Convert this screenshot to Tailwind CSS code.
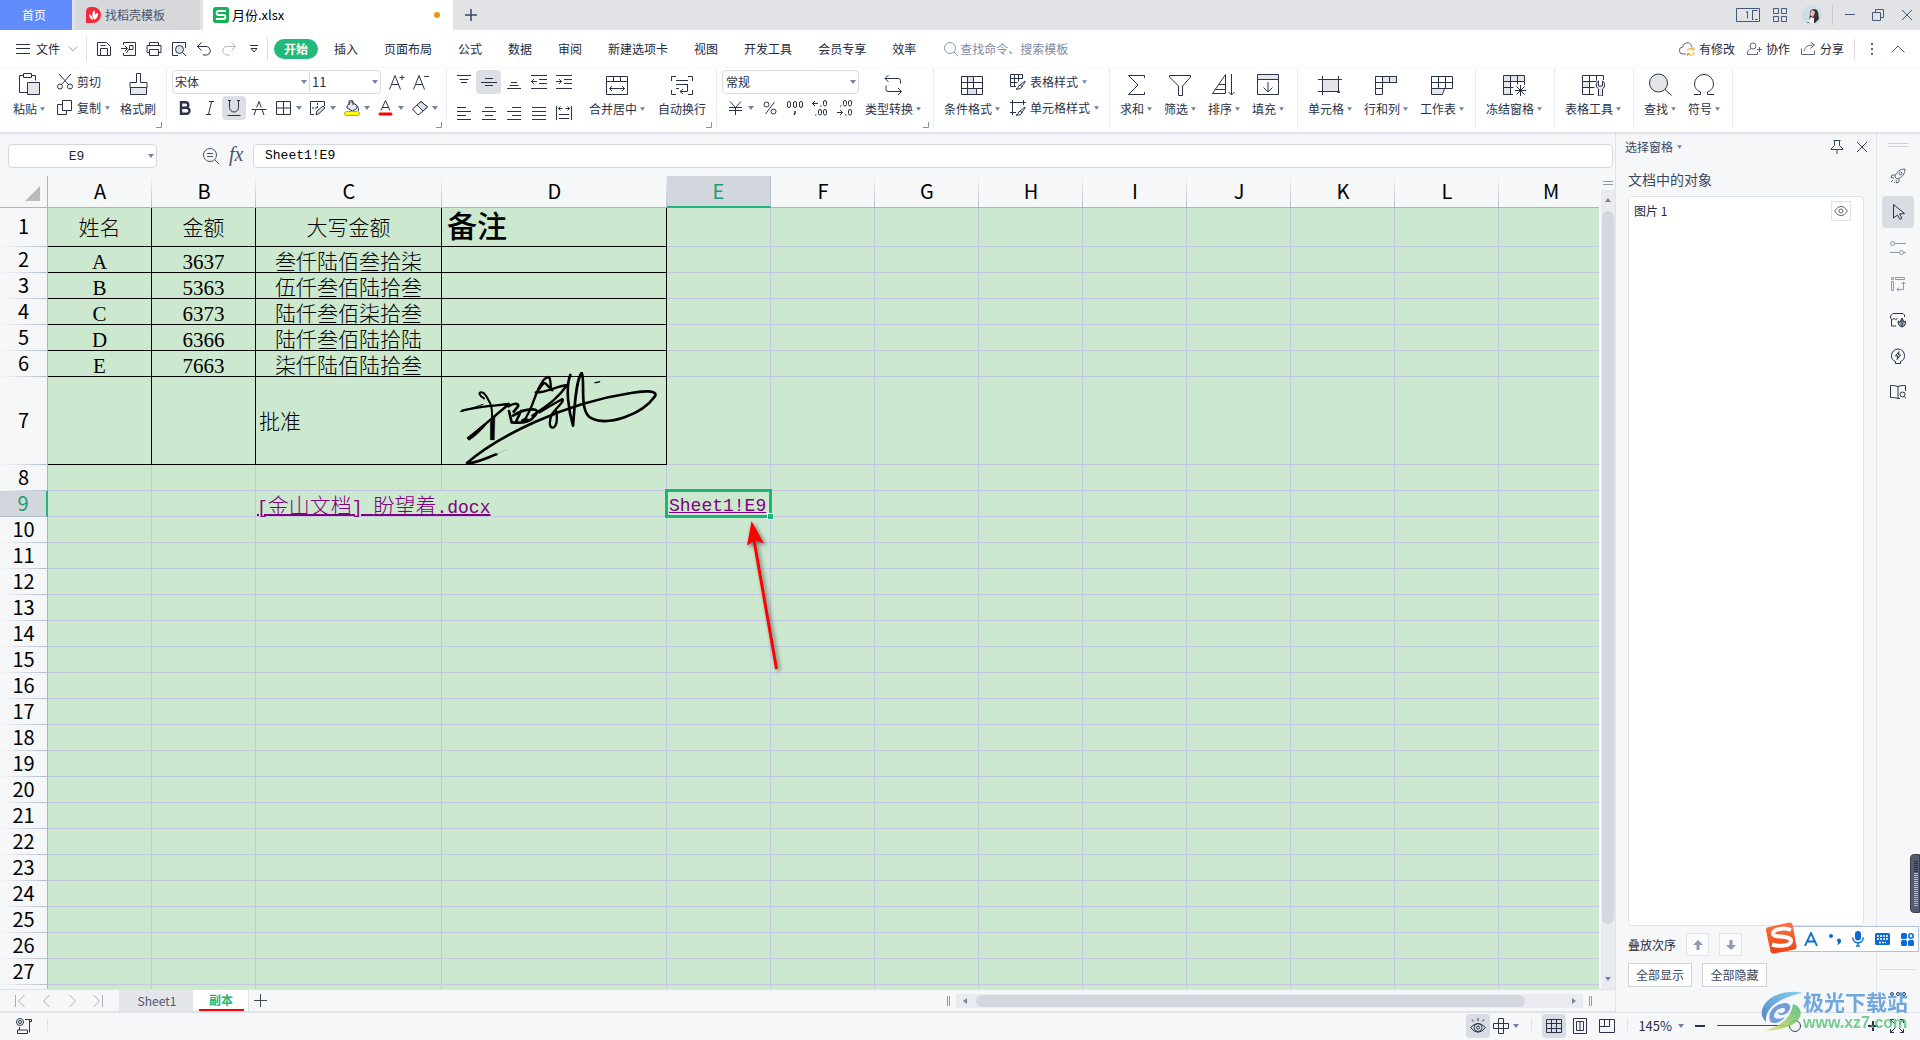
<!DOCTYPE html>
<html lang="zh-CN" class="h-full overflow-hidden">
<head>
<meta charset="utf-8">
<title>月份.xlsx</title>
<script src="https://cdn.jsdelivr.net/npm/@tailwindcss/browser@4"></script>
</head>
<body class="relative flex h-full flex-col overflow-hidden bg-[#f5f7f9] font-['Noto_Sans_CJK_SC',sans-serif] text-xs text-[#232a3d]">

<svg class="hidden">
  <symbol id="caret" viewBox="0 0 6 4"><path d="M0 0h6L3 4z" fill="#7282a3"/></symbol>
  <symbol id="corner" viewBox="0 0 6 6"><path d="M5.500 0v5.500H0" fill="none" stroke="#8390ab"/></symbol>
</svg>

<!-- title bar -->
<header class="flex h-[30px] shrink-0 items-stretch bg-[#e1e3e6]">
  <button class="w-[72px] bg-[#608dfb] pr-1 text-white">首页</button>
  <button class="ml-[3px] flex w-[125px] items-center gap-[3px] bg-[#d7d8db] pl-[11px] text-[#4b5468]">
    <svg class="size-4" viewBox="0 0 16 16"><path d="M0 4.500A4.500 4.500 0 0 1 4.500 0H7a8 8 0 1 1 0 16H0z" fill="#f4293b"/><path d="M8 3c2 3 1.500 6-.5 9C5.500 9 6 6 8 3zM12 5.500c.6 3.500-.8 6-4 7.500 0-3.500 1-6 4-7.500zM3 7c2.500 1 3.800 3 4 6-2.500-.8-4-3-4-6z" fill="#fff"/></svg>
    <span>找稻壳模板</span>
  </button>
  <button class="ml-[3px] flex w-[250px] items-center gap-[3px] bg-white pl-[10px] pr-[13px] text-black">
    <svg class="size-4" viewBox="0 0 16 16"><rect width="16" height="16" rx="2.500" fill="#15b358"/><path d="M13 4H5.500C3 4 3 8 5.500 8h5c2.500 0 2.500 4 0 4H3" fill="none" stroke="#fff" stroke-width="1.800"/></svg>
    <span class="text-[13px]">月份.xlsx</span>
    <span class="ml-auto size-1.5 rounded-full bg-[#e59a0c]"></span>
  </button>
  <button class="ml-2 flex w-5 items-center justify-center" aria-label="新建"><svg class="size-3" viewBox="0 0 12 12"><path d="M6 0v12M0 6h12" stroke="#3c465d" stroke-width="1.500"/></svg></button>
  <div class="ml-auto flex items-center pr-2 text-[#47577c]">
    <svg class="h-3.5 w-6" viewBox="0 0 24 14" fill="none" stroke="currentColor"><path d="M.5.500h23v13H.500zM16.500 2v10M16.500 2.500h5M16.500 11.500h1M10 4.500l1.500-1v7M19 11.500h2.500"/></svg>
    <svg class="ml-[13px] size-3.5" viewBox="0 0 14 14" fill="none" stroke="currentColor"><path d="M.5.500h5v5h-5zM8.500.500h5v5h-5zM.5 8.500h5v5h-5zM8.500 8.500h5v5h-5z"/></svg>
    <svg class="ml-[15px] size-5" viewBox="0 0 20 20"><circle cx="10" cy="10" r="10" fill="#cddfe6"/><path d="M8 7c1-4 7-4 8 0l1 7-4 4-8 0c2-2 3-6 3-11z" fill="#3a2f38"/><path d="M9 6c2-2 4 0 4 2l-2 4-3-2z" fill="#e6bdb2"/><path d="M5 17l4-5 3 1 0 6z" fill="#f3eef0"/></svg>
    <span class="ml-2.5 h-5 w-px bg-[#c6c9cf]"></span>
    <button class="ml-3 h-5 w-2.5" aria-label="最小化"><svg class="size-2.5" viewBox="0 0 10 10"><path d="M0 4.500h10" stroke="currentColor"/></svg></button>
    <button class="ml-[17px]" aria-label="还原"><svg class="size-3" viewBox="0 0 12 12" fill="none" stroke="currentColor"><path d="M.5 3.500h8v8h-8zM3.500 3.500v-3h8v8h-3"/></svg></button>
    <button class="ml-[18px]" aria-label="关闭"><svg class="size-2.5" viewBox="0 0 10 10" stroke="currentColor"><path d="M0 0l10 10M10 0L0 10"/></svg></button>
  </div>
</header>

<!-- menu row -->
<nav class="flex h-[38px] shrink-0 items-center bg-white">
  <button class="flex w-[86px] items-center pl-4">
    <svg class="h-3 w-3.5" viewBox="0 0 14 12" stroke="#2b3248"><path d="M0 1.500h14M0 5.500h14M0 10.500h14"/></svg>
    <span class="ml-1.5">文件</span>
    <svg class="ml-2 h-1.5 w-2.5" viewBox="0 0 10 6" fill="none" stroke="#a2aab9"><path d="M.5.500L5 5 9.500.500"/></svg>
  </button>
  <span class="h-6 w-px bg-[#dcdee3]"></span>
  <div class="flex pl-1 pr-px text-[#2b3248]">
    <button class="flex w-[25px] justify-center" aria-label="保存"><svg class="size-4" viewBox="0 0 16 16" fill="none" stroke="currentColor"><path d="M1.500 1.500h9l4 4v9h-13zM4.500 14.500v-7h7v7M4.500 4.500h5"/></svg></button>
    <button class="flex w-[25px] justify-center" aria-label="输出"><svg class="size-4" viewBox="0 0 16 16" fill="none" stroke="currentColor"><path d="M2.500 4V1.500h12v13h-12V12M0 7.500h6M4 5l2.500 2.500L4 10M8.500 4.500h3.500v4H7.500L5.500 12M8.500 4.500V8"/></svg></button>
    <button class="flex w-[25px] justify-center" aria-label="打印"><svg class="size-4" viewBox="0 0 16 16" fill="none" stroke="currentColor"><path d="M3.500 4.500v-3h9v3M3.500 11.500h-2.500v-7h14v7h-2.500M3.500 8.500h9v6h-9z"/></svg></button>
    <button class="flex w-[25px] justify-center" aria-label="预览"><svg class="size-4" viewBox="0 0 16 16" fill="none" stroke="currentColor"><path d="M7 14.500H1.500v-13h13V7"/><circle cx="8.500" cy="8.500" r="4" fill="#dcdfe5"/><path d="M11.500 11.500l3.500 3.500"/></svg></button>
    <button class="flex w-[25px] justify-center" aria-label="撤销"><svg class="size-4" viewBox="0 0 16 16" fill="none" stroke="currentColor"><path d="M5.500 1.500l-4 4 4 4M1.500 5.500H10a4 4 0 0 1 0 8.500H7"/></svg></button>
    <button class="flex w-[25px] justify-center text-[#b3b6bd]" aria-label="恢复"><svg class="size-4" viewBox="0 0 16 16" fill="none" stroke="currentColor"><path d="M10.500 1.500l4 4-4 4M14.500 5.500H6a4 4 0 0 0 0 8.500h3"/></svg></button>
    <button class="flex w-[25px] items-center justify-center" aria-label="更多"><svg class="h-2 w-2" viewBox="0 0 8 8" fill="none" stroke="currentColor"><path d="M0 .500h8M1 3.500h6L4 7z"/></svg></button>
  </div>
  <span class="h-6 w-px bg-[#dcdee3]"></span>
  <button class="ml-1.5 h-5 w-11 rounded-full bg-[#23b97c] font-bold leading-5 text-white">开始</button>
  <div class="ml-4 flex gap-[26px]">
    <button>插入</button><button>页面布局</button><button>公式</button><button>数据</button><button>审阅</button><button>新建选项卡</button><button>视图</button><button>开发工具</button><button>会员专享</button><button>效率</button>
  </div>
  <label class="ml-7 flex items-center gap-0.5">
    <svg class="size-3.5" viewBox="0 0 14 14" fill="none" stroke="#8d98b0"><circle cx="6" cy="6" r="5.500"/><path d="M10 10l4 4"/></svg>
    <input class="w-36 bg-transparent outline-none placeholder:text-[#7d8aa6]" placeholder="查找命令、搜索模板" aria-label="搜索">
  </label>
  <div class="ml-auto flex items-center pr-[15px]">
    <button class="flex items-center gap-1"><svg class="size-4" viewBox="0 0 16 16" fill="none"><path d="M7 13H4a3.500 3.500 0 0 1-.3-7A4.500 4.500 0 0 1 12.500 5c.3.400.5 1 .5 1.500" stroke="#5b6579"/><path d="M8.500 10a3.500 3.500 0 0 1 6-1.500M15 11a3.500 3.500 0 0 1-6 2M15 6.500v2.500h-2.500M8.500 15v-2.500H11" stroke="#f0a30a"/></svg>有修改</button>
    <button class="ml-3 flex items-center gap-1"><svg class="h-4 w-[15px]" viewBox="0 0 15 16" fill="none" stroke="#5b6579"><circle cx="6" cy="5" r="3"/><path d="M4 8c-2.500 0-3.500 2-3.500 5.500h10V11M10 8.500h5M12.500 6v5"/></svg>协作</button>
    <button class="ml-[11px] flex items-center gap-1"><svg class="h-4 w-[15px]" viewBox="0 0 15 16" fill="none" stroke="#5b6579"><path d="M.5 7.500v6h13v-4M3.500 10c0-4 3-6 9.500-6M9.500 1l4 3-4 3.500"/></svg>分享</button>
    <span class="ml-2.5 h-5 w-px bg-[#d5d8dd]"></span>
    <button class="ml-4 grid gap-[3px]" aria-label="更多选项"><span class="size-0.5 bg-[#596377]"></span><span class="size-0.5 bg-[#596377]"></span><span class="size-0.5 bg-[#596377]"></span></button>
    <button class="ml-[18px]" aria-label="折叠"><svg class="h-2 w-3.5" viewBox="0 0 14 8" fill="none" stroke="#596377"><path d="M.5 7.500L7 1l6.500 6.500"/></svg></button>
  </div>
</nav>

<!-- ribbon -->
<section class="relative z-10 flex h-16 shrink-0 bg-white pb-0.5 text-[#2b3248] shadow-[0_1px_3px_rgba(60,70,90,0.2)]">
  <div class="relative flex w-[167px] border-r border-[#eceef1] pl-[13px] pt-1">
    <button class="flex flex-col items-center"><svg class="size-6" viewBox="0 0 24 24" fill="none" stroke="currentColor"><path d="M6.500 3.500h-4v17h8M14.500 3.500h4v5M6.500 1.500h8v4h-8z"/><path d="M10.500 10.500h12v12h-12z" fill="#e4e6ea"/></svg><span class="mt-1 flex items-center gap-[3px] leading-[18px]">粘贴<svg class="h-1 w-[5px]"><use href="#caret"/></svg></span></button>
    <div class="-mt-0.5 ml-3 flex flex-col gap-0.5">
      <button class="flex h-6 items-center gap-1"><svg class="size-4" viewBox="0 0 16 16" fill="none" stroke="currentColor"><circle cx="3" cy="12.500" r="2.500"/><circle cx="13" cy="12.500" r="2.500"/><path d="M2 0l9.500 10.500M14 0L4.500 10.500"/></svg>剪切</button>
      <button class="flex h-6 items-center gap-1"><svg class="size-4" viewBox="0 0 16 16" fill="none" stroke="currentColor"><path d="M5.500.500h9v10h-9zM5.500 4.500h-5v10h9v-4"/></svg>复制<svg class="h-1 w-[5px]"><use href="#caret"/></svg></button>
    </div>
    <button class="ml-2.5 flex flex-col items-center"><svg class="size-6" viewBox="0 0 24 24" fill="none" stroke="currentColor"><path d="M10.500 10.500v-9h4v9h6.500v5h-17v-5z"/><path d="M4.500 15.500h16v7h-16z" fill="#e4e6ea"/></svg><span class="mt-1 leading-[18px]">格式刷</span></button>
    <svg class="absolute bottom-0.5 right-1 size-1.5"><use href="#corner"/></svg>
  </div>

  <div class="relative flex w-[280px] flex-col gap-0.5 border-r border-[#eceef1] pl-[5px] pt-0.5">
    <div class="flex h-6 items-center">
      <div class="relative"><select aria-label="字体" class="h-6 w-[138px] appearance-none rounded-l-sm border border-[#d9dce1] bg-white pl-0.5"><option>宋体</option></select><svg class="pointer-events-none absolute right-[3px] top-2.5 h-1 w-1.5"><use href="#caret"/></svg></div>
      <div class="relative"><select aria-label="字号" class="h-6 w-[71px] appearance-none rounded-r-sm border border-l-0 border-[#d9dce1] bg-white pl-0.5 text-[13px]"><option>11</option></select><svg class="pointer-events-none absolute right-[3px] top-2.5 h-1 w-1.5"><use href="#caret"/></svg></div>
      <button class="ml-2 w-4" aria-label="增大字号"><svg class="size-4" viewBox="0 0 16 16" fill="none" stroke="currentColor"><path d="M.5 15.500L6 1.500l5.500 14M2.500 10.500h7M10.500 3.500h5M13 1v5"/></svg></button>
      <button class="ml-2 w-4" aria-label="减小字号"><svg class="size-4" viewBox="0 0 16 16" fill="none" stroke="currentColor"><path d="M.5 15.500L6 1.500l5.500 14M2.500 10.500h7M11 2.500h5"/></svg></button>
    </div>
    <div class="flex h-6 items-center">
      <button class="w-[25px] text-center" aria-label="加粗"><svg class="mx-auto size-4" viewBox="0 0 16 16" fill="none" stroke="currentColor" stroke-width="2.400"><path d="M4 2.200h4.500a2.800 2.800 0 0 1 0 5.600H4zM4 7.800h5.500a3 3 0 0 1 0 6H4zM4 1v14"/></svg></button>
      <button class="w-[25px]" aria-label="倾斜"><svg class="mx-auto size-4" viewBox="0 0 16 16" fill="none" stroke="currentColor"><path d="M7 1.500h5M4 14.500h5M9.500 1.500l-3 13"/></svg></button>
      <button class="h-6 w-6 rounded-sm bg-[#dce0e5]" aria-label="下划线"><svg class="mx-auto size-4" viewBox="0 0 16 16" fill="none" stroke="currentColor"><path d="M1.500 15.500h13M2 .500h3M11 .500h3M3.500.500v7a4.500 4.500 0 0 0 9 0v-7"/></svg></button>
      <button class="w-[25px]" aria-label="删除线"><svg class="mx-auto size-4" viewBox="0 0 16 16" fill="none" stroke="currentColor"><path d="M3 15l2-5.500M13 15l-2-5.500M5.700 7.500L8 1.500l2.300 6M.5 9.500h15"/></svg></button>
      <button class="ml-0.5 flex w-[34px] items-center gap-1 pl-[3px]" aria-label="边框"><svg class="size-4" viewBox="0 0 16 16" fill="none" stroke="currentColor"><path d="M.5 1.500h14v13H.500zM7.500 1.500v13M.5 8h14"/></svg><svg class="h-1 w-1.5"><use href="#caret"/></svg></button>
      <button class="flex w-[34px] items-center gap-1 pl-[3px]" aria-label="绘制边框"><svg class="size-4" viewBox="0 0 16 16" fill="none" stroke="currentColor"><path d="M4 14.500H.500v-13h14V6"/><path d="M2 8h6M7.500 3v6" stroke-dasharray="2 1"/><path d="M6 15l1-4 6-5 2 2-6 5.500z" fill="#dfe2e7"/></svg><svg class="h-1 w-1.5"><use href="#caret"/></svg></button>
      <button class="flex w-[34px] items-center gap-1 pl-[3px]" aria-label="填充颜色"><svg class="size-4" viewBox="0 0 16 16" fill="none" stroke="currentColor"><path d="M3 6l4-4.500 6 4v3L8.500 11 3 8z" fill="#e4e6ea"/><path d="M5 5V2a2 2 0 0 1 4 0v3M13 6c2 2 1.500 4 1.500 5"/><rect x=".5" y="11.500" width="15" height="4" rx="2" fill="#ff0" stroke="#b9ab24"/></svg><svg class="h-1 w-1.5"><use href="#caret"/></svg></button>
      <button class="flex w-[34px] items-center gap-1 pl-[3px]" aria-label="字体颜色"><svg class="size-4" viewBox="0 0 16 16" fill="none" stroke="currentColor"><path d="M3 10.500l4.500-10 4.500 10M4.500 7.500h6"/><path d="M2 14h11" stroke="red" stroke-width="3" stroke-linecap="round"/></svg><svg class="h-1 w-1.5"><use href="#caret"/></svg></button>
      <button class="flex w-[34px] items-center gap-1 pl-[3px]" aria-label="清除"><svg class="size-4" viewBox="0 0 16 16" fill="none" stroke="currentColor"><path d="M.5 9L9 1.500 15.500 7 7 14.500H5.500z"/><path d="M5 5l6 6 4.500-4L9 1.500z" fill="#dfe2e7"/></svg><svg class="h-1 w-1.5"><use href="#caret"/></svg></button>
    </div>
    <svg class="absolute bottom-0.5 right-1 size-1.5"><use href="#corner"/></svg>
  </div>

  <div class="relative flex w-[270px] border-r border-[#eceef1] pl-1 pt-0.5">
    <div class="grid grid-cols-5 gap-y-0.5">
      <button class="flex h-6 w-[25px] items-center justify-center" aria-label="顶端对齐"><svg class="h-4 w-3.5" viewBox="0 0 14 16" stroke="currentColor"><path d="M0 1.500h14M2.500 5.500h9M4 8.500h6"/></svg></button>
      <button class="flex h-6 w-[25px] items-center justify-center rounded-sm bg-[#dce0e5]" aria-label="垂直居中"><svg class="h-4 w-4" viewBox="0 0 16 16" stroke="currentColor"><path d="M4 4.500h8M0 8.500h16M4 11.500h8"/></svg></button>
      <button class="flex h-6 w-[25px] items-center justify-center" aria-label="底端对齐"><svg class="h-4 w-3.5" viewBox="0 0 14 16" stroke="currentColor"><path d="M4 8.500h6M2.500 11.500h9M0 14.500h14"/></svg></button>
      <button class="flex h-6 w-[25px] items-center justify-center" aria-label="减少缩进"><svg class="size-4" viewBox="0 0 16 16" fill="none" stroke="currentColor"><path d="M0 1.500h16M8 5.500h8M8 9.500h8M0 14.500h16M0 7.500h6M3 5L.500 7.500 3 10"/></svg></button>
      <button class="flex h-6 w-[25px] items-center justify-center" aria-label="增加缩进"><svg class="size-4" viewBox="0 0 16 16" fill="none" stroke="currentColor"><path d="M0 1.500h16M8 5.500h8M8 9.500h8M0 14.500h16M0 7.500h6M3 5l2.500 2.500L3 10"/></svg></button>
      <button class="flex h-6 w-[25px] items-center justify-center" aria-label="左对齐"><svg class="h-4 w-3.5" viewBox="0 0 14 16" stroke="currentColor"><path d="M0 2.500h9M0 6.500h14M0 10.500h9M0 14.500h14"/></svg></button>
      <button class="flex h-6 w-[25px] items-center justify-center" aria-label="水平居中"><svg class="h-4 w-3.5" viewBox="0 0 14 16" stroke="currentColor"><path d="M3 2.500h8M0 6.500h14M3 10.500h8M0 14.500h14"/></svg></button>
      <button class="flex h-6 w-[25px] items-center justify-center" aria-label="右对齐"><svg class="h-4 w-3.5" viewBox="0 0 14 16" stroke="currentColor"><path d="M5 2.500h9M0 6.500h14M5 10.500h9M0 14.500h14"/></svg></button>
      <button class="flex h-6 w-[25px] items-center justify-center" aria-label="两端对齐"><svg class="h-4 w-3.5" viewBox="0 0 14 16" stroke="currentColor"><path d="M0 2.500h14M0 6.500h14M0 10.500h14M0 14.500h14"/></svg></button>
      <button class="flex h-6 w-[25px] items-center justify-center" aria-label="分散对齐"><svg class="size-4" viewBox="0 0 16 16" fill="none" stroke="currentColor"><path d="M.5 1v14M15.500 1v14M3 9.500h10M3 13.500h10M2.500 3.500h4M9.500 3.500h4M4.500 1.500l-2 2 2 2M11.500 1.500l2 2-2 2"/></svg></button>
    </div>
    <button class="ml-[13px] mt-0.5 flex flex-col items-center"><svg class="size-6" viewBox="0 0 24 24" fill="none" stroke="currentColor"><path d="M1.500 4.500h21v18h-21zM1.500 9.500h21M8.500 4.500v5M15.500 4.500v5M4.500 16.500h15M7 14l-2.500 2.500L7 19M17 14l2.500 2.500L17 19"/></svg><span class="mt-1 flex items-center gap-[3px] leading-[18px]">合并居中<svg class="h-1 w-[5px]"><use href="#caret"/></svg></span></button>
    <button class="ml-[13px] mt-0.5 flex flex-col items-center"><svg class="size-6" viewBox="0 0 24 24" fill="none" stroke="currentColor"><path d="M6 4.500H1.500V9M18 4.500h4.500V9M6 22.500H1.500V18M18 22.500h4.500V18M6 8.500h12M6 12.500h12M6 16.500h3M17.500 12.500v7H10M13 17l-3 2.500 3 2.500"/></svg><span class="mt-1 leading-[18px]">自动换行</span></button>
    <svg class="absolute bottom-0.5 right-1 size-1.5"><use href="#corner"/></svg>
  </div>

  <div class="relative flex w-[217px] border-r border-[#eceef1] pl-[5px] pt-0.5">
    <div class="flex flex-col gap-0.5">
      <div class="relative"><select aria-label="数字格式" class="h-6 w-[137px] appearance-none rounded-sm border border-[#d9dce1] bg-white pl-[3px]"><option>常规</option></select><svg class="pointer-events-none absolute right-[3px] top-2.5 h-1 w-1.5"><use href="#caret"/></svg></div>
      <div class="flex h-6 items-center">
        <button class="flex w-[35px] items-center gap-1.5 pl-[7px]" aria-label="货币"><svg class="h-4 w-[13px]" viewBox="0 0 13 16" fill="none" stroke="currentColor"><path d="M1 1.500l5.500 6 5.500-6M0 7.500h13M0 10.500h13M6.500 7.500v7.500"/></svg><svg class="h-1 w-1.5 shrink-0"><use href="#caret"/></svg></button>
        <button class="w-[25px]" aria-label="百分比"><svg class="mx-auto h-4 w-3.5" viewBox="0 0 14 16" fill="none" stroke="currentColor"><circle cx="3.500" cy="4.500" r="2.500"/><circle cx="10.500" cy="11.500" r="2.500"/><path d="M11.500 2l-9 12"/></svg></button>
        <button class="w-[25px]" aria-label="千位分隔"><svg class="mx-auto h-4 w-[18px]" viewBox="0 0 18 16" fill="none" stroke="currentColor"><rect x="1.500" y="1.500" width="3" height="6" rx="1.500"/><rect x="7.500" y="1.500" width="3" height="6" rx="1.500"/><rect x="13.500" y="1.500" width="3" height="6" rx="1.500"/><path d="M9 11v2l-1 2" stroke-width="1.500"/></svg></button>
        <button class="w-[25px]" aria-label="增加小数"><svg class="mx-auto h-4 w-[18px]" viewBox="0 0 18 16" fill="none" stroke="currentColor"><path d="M1.500 3.500H7M4 1L1.500 3.500 4 6M9 6h1.500M4 15h1.500"/><rect x="12.500" y=".5" width="3" height="5.500" rx="1.500"/><rect x="7.500" y="9.500" width="3" height="5.500" rx="1.500"/><rect x="12.500" y="9.500" width="3" height="5.500" rx="1.500"/></svg></button>
        <button class="w-[25px]" aria-label="减少小数"><svg class="mx-auto h-4 w-[18px]" viewBox="0 0 18 16" fill="none" stroke="currentColor"><path d="M1 12.500h5.500M4 10l2.500 2.500L4 15M4 6h1.500M9 15h1.500"/><rect x="7.500" y=".5" width="3" height="5.500" rx="1.500"/><rect x="12.500" y=".5" width="3" height="5.500" rx="1.500"/><rect x="12.500" y="9.500" width="3" height="5.500" rx="1.500"/></svg></button>
      </div>
    </div>
    <button class="ml-1.5 mt-0.5 flex flex-col items-center"><svg class="size-6" viewBox="0 0 24 24" fill="none" stroke="currentColor"><path d="M7.500 3L4 6.500 7.500 10M4 6.500h13.500a2 2 0 0 1 2 2v3M17 16l3.500 3.500L17 23M20.500 19.500H7a2 2 0 0 1-2-2v-4"/></svg><span class="mt-1 flex items-center gap-[3px] leading-[18px]">类型转换<svg class="h-1 w-[5px]"><use href="#caret"/></svg></span></button>
    <svg class="absolute bottom-0.5 right-1 size-1.5"><use href="#corner"/></svg>
  </div>

  <div class="flex w-[176px] border-r border-[#eceef1] pl-2.5 pt-1">
    <button class="flex flex-col items-center"><svg class="size-6" viewBox="0 0 24 24" fill="none" stroke="currentColor"><path d="M7.500 4.500h6v6h-6zM7.500 16.500h9v6h-9z" fill="#dfe2e7" stroke="none"/><path d="M1.500 4.500h21v18h-21zM1.500 10.500h21M1.500 16.500h21M7.500 4.500v12M13.500 4.500v12M7.500 16.500v6M16.500 16.500v6"/></svg><span class="mt-1 flex items-center gap-[3px] leading-[18px]">条件格式<svg class="h-1 w-[5px]"><use href="#caret"/></svg></span></button>
    <div class="-mt-0.5 ml-2.5 flex flex-col gap-0.5">
      <button class="flex h-6 items-center gap-1"><svg class="size-4" viewBox="0 0 16 16" fill="none" stroke="currentColor"><path d="M6 12.500H.500v-12h12V5M.5 4.500h12M.5 8.500h7M4.500.500v12M8.500.500v7M15 7l-5 4M15.500 7.500L11.500 13M6 15c2 0 2-1 2.500-3l2-1 1.500 1.500c-.5 2-2.500 3-6 2.500z"/></svg>表格样式<svg class="h-1 w-[5px]"><use href="#caret"/></svg></button>
      <button class="flex h-6 items-center gap-1"><svg class="size-4" viewBox="0 0 16 16" fill="none" stroke="currentColor"><path d="M2.500 0v15M0 2.500h16M13.500 0v5M0 12.500h6M15 7l-5 4M15.500 7.500L11.500 13M6 15c2 0 2-1 2.500-3l2-1 1.500 1.500c-.5 2-2.500 3-6 2.500z"/></svg>单元格样式<svg class="h-1 w-[5px]"><use href="#caret"/></svg></button>
    </div>
  </div>

  <div class="flex w-[188px] gap-3 border-r border-[#eceef1] pl-2.5 pt-1">
    <button class="flex flex-col items-center"><svg class="size-6" viewBox="0 0 24 24" fill="none" stroke="currentColor"><path d="M20.500 6V3.500h-16L14 13 4.500 22.500h16V20"/></svg><span class="mt-1 flex items-center gap-[3px] leading-[18px]">求和<svg class="h-1 w-[5px]"><use href="#caret"/></svg></span></button>
    <button class="flex flex-col items-center"><svg class="size-6" viewBox="0 0 24 24" fill="none" stroke="currentColor"><path d="M1.500 3.500h21V5l-8 9v9.500h-4V14l-9-9z"/></svg><span class="mt-1 flex items-center gap-[3px] leading-[18px]">筛选<svg class="h-1 w-[5px]"><use href="#caret"/></svg></span></button>
    <button class="flex flex-col items-center"><svg class="size-6" viewBox="0 0 24 24" fill="none" stroke="currentColor"><path d="M.5 21.500L13.500 2.500v19zM7 12.500h6.500M3 17.500h10.500M19.500 2v21M16.500 20l3 3 3-3"/></svg><span class="mt-1 flex items-center gap-[3px] leading-[18px]">排序<svg class="h-1 w-[5px]"><use href="#caret"/></svg></span></button>
    <button class="flex flex-col items-center"><svg class="size-6" viewBox="0 0 24 24" fill="none" stroke="currentColor"><path d="M1.500 2.500h21v5h-21z" fill="#e4e6ea"/><path d="M1.500 7.500h21v15h-21zM12 10v10M7.500 15.500L12 20l4.500-4.500"/></svg><span class="mt-1 flex items-center gap-[3px] leading-[18px]">填充<svg class="h-1 w-[5px]"><use href="#caret"/></svg></span></button>
  </div>

  <div class="flex w-[178px] gap-3 border-r border-[#eceef1] pl-2.5 pt-1">
    <button class="flex flex-col items-center"><svg class="size-6" viewBox="0 0 24 24" fill="none" stroke="currentColor"><path d="M4.500 7.500h16v12h-16z" fill="#e4e6ea"/><path d="M4.500 4v19M20.500 4v13M0 7.500h24M0 19.500h18M19.500 19.500h2v1h-2z"/></svg><span class="mt-1 flex items-center gap-[3px] leading-[18px]">单元格<svg class="h-1 w-[5px]"><use href="#caret"/></svg></span></button>
    <button class="flex flex-col items-center"><svg class="size-6" viewBox="0 0 24 24" fill="none" stroke="currentColor"><path d="M8.500 4.500h14v6h-14z" fill="#e4e6ea"/><path d="M1.500 4.500h21v6h-14v12h-7zM8.500 4.500v6M15.500 4.500v6M1.500 10.500h7M1.500 16.500h7"/></svg><span class="mt-1 flex items-center gap-[3px] leading-[18px]">行和列<svg class="h-1 w-[5px]"><use href="#caret"/></svg></span></button>
    <button class="flex flex-col items-center"><svg class="size-6" viewBox="0 0 24 24" fill="none" stroke="currentColor"><path d="M1.500 16.500h13l-2 6h-11z" fill="#e4e6ea"/><path d="M1.500 4.500h21v12h-21zM1.500 10.500h21M8.500 4.500v12M15.500 4.500v12"/></svg><span class="mt-1 flex items-center gap-[3px] leading-[18px]">工作表<svg class="h-1 w-[5px]"><use href="#caret"/></svg></span></button>
  </div>

  <div class="w-[79px] border-r border-[#eceef1] pl-2.5 pt-1">
    <button class="flex flex-col items-center"><svg class="size-6" viewBox="0 0 24 24" fill="none" stroke="currentColor"><path d="M1.500 3.500h21v6h-14v13h-7z" fill="#e4e6ea"/><path d="M1.500 9.500h21V13M1.500 15.500h10M8.500 3.500v19M15.500 3.500v9M1.500 22.500H11M18.500 13v11M13 18.500h11M14.500 14.500l8 8M22.500 14.500l-8 8"/></svg><span class="mt-1 flex items-center gap-[3px] leading-[18px]">冻结窗格<svg class="h-1 w-[5px]"><use href="#caret"/></svg></span></button>
  </div>
  <div class="w-[79px] border-r border-[#eceef1] pl-2.5 pt-1">
    <button class="flex flex-col items-center"><svg class="size-6" viewBox="0 0 24 24" fill="none" stroke="currentColor"><path d="M1.500 9.500h7v6h-7z" fill="#e4e6ea"/><path d="M13 22.500H1.500v-19h21V8M1.500 9.500h14M1.500 15.500h12M8.500 3.500v19M15.500 3.500v5"/><path d="M17.500 9c-3 2-3 6 0 8v7h4v-7c3-2 3-6 0-8v5h-4z" fill="#e4e6ea"/></svg><span class="mt-1 flex items-center gap-[3px] leading-[18px]">表格工具<svg class="h-1 w-[5px]"><use href="#caret"/></svg></span></button>
  </div>
  <div class="flex w-[99px] gap-3 border-r border-[#eceef1] pl-2.5 pt-1">
    <button class="flex flex-col items-center"><svg class="size-6" viewBox="0 0 24 24" fill="none" stroke="currentColor"><circle cx="10.500" cy="11" r="9" fill="#e4e6ea"/><path d="M17 17.500l6.500 6"/></svg><span class="mt-1 flex items-center gap-[3px] leading-[18px]">查找<svg class="h-1 w-[5px]"><use href="#caret"/></svg></span></button>
    <button class="flex flex-col items-center"><svg class="size-6" viewBox="0 0 24 24" fill="none" stroke="currentColor"><path d="M2 22.500h6.500V20C4 18 2.500 15 2.500 12a9.500 9.500 0 0 1 19 0c0 3-1.500 6-6 8v2.500H22"/></svg><span class="mt-1 flex items-center gap-[3px] leading-[18px]">符号<svg class="h-1 w-[5px]"><use href="#caret"/></svg></span></button>
  </div>
</section>

<!-- workspace -->
<main class="flex min-h-0 flex-1">
  <section class="flex min-w-0 flex-1 flex-col">
    <div class="flex h-11 shrink-0 items-center py-1 pl-2 pr-0.5">
      <div class="relative mt-1"><input aria-label="名称框" value="E9" class="h-6 w-[149px] rounded-sm border border-[#d5d8dd] bg-white pr-3 text-center font-['Liberation_Mono',monospace] text-[13px]"><svg class="pointer-events-none absolute right-[3px] top-2.5 h-1 w-1.5"><use href="#caret"/></svg></div>
      <svg class="ml-[46px] mt-1 size-4" viewBox="0 0 16 16" fill="none" stroke="#4a556d"><circle cx="7" cy="7" r="6.500"/><path d="M12 12l4 4M4 5.500h6M4 8.500h6"/></svg>
      <span class="ml-2.5 w-6 font-['Liberation_Serif',serif] text-xl italic leading-6 text-[#4a556d]">fx</span>
      <input aria-label="编辑栏" value="Sheet1!E9" class="mt-1 h-6 min-w-0 flex-1 rounded-sm border border-[#d5d8dd] bg-white pb-0.5 pl-[11px] font-['Liberation_Mono',monospace] text-[13px] text-black">
    </div>

    <div class="flex min-h-0 flex-1">
      <div class="relative mr-0.5 min-w-0 flex-1 overflow-hidden">
        <table id="grid" class="w-[1603px] table-fixed border-separate border-spacing-0 bg-[#cce8cf]">
          <colgroup id="cols"></colgroup>
          <thead><tr id="head"></tr></thead>
          <tbody id="rows"></tbody>
        </table>
        <!-- handwritten signature picture -->
        <svg class="pointer-events-none absolute left-[458px] top-[196px] h-[95px] w-[200px]" viewBox="85 95 600 285" fill="none" stroke="#000" stroke-linecap="round" stroke-linejoin="round">
          <path d="M92 214c15-4 40-12 68-22" stroke-width="3"/>
          <path d="M98 211c40-12 90-15 140-20L116 294" stroke-width="7"/>
          <path d="M172 246L112 292l6 8c16-10 40-30 56-54z" fill="#000" stroke-width="2"/>
          <path d="M163 174c-14-8-18-18-8-18s16 12 28 36c8 20 2 60 6 100" stroke-width="6"/>
          <path d="M182 245l0 54 12 0 2-70z" fill="#000" stroke-width="1"/>
          <path d="M238 212l8 34c20 2 50 2 62-12 14-14 20-22 8-26-24-4-50 8-66 18M236 198c14-8 22-10 28-6s-6 14-12 22M260 242l14-30M300 240c-8-2-14-4-22 0" stroke-width="8"/>
          <path d="M282 242c24-30 34-80 48-104 10-18 16-28 28-28 6 8 4 26 6 32M322 156c10-14 20-34 26-26l20 20M318 156c30 2 60-18 94-22-30 46-70 68-104 92" stroke-width="7"/>
          <path d="M330 216c22-14 40-24 68-40 8 8-22 30-30 44-10 18-10 40 0 42 12 0 16-20 12-50" stroke-width="7"/>
          <path d="M422 104c-16 40-4 110 8 152 4-40 8-140 26-158 12 20-10 120 30 136 50 24 150-10 190-66 10-20-40-16-72-10-200 30-400 130-492 210 20 4 60-16 88-26" stroke-width="8"/>
          <path d="M198 342l34-14" stroke="#8aa08c" stroke-width="1.500"/>
          <path d="M496 127c6 0 10-1 14-3" stroke-width="4"/>
        </svg>
        <!-- red pointer arrow -->
        <svg class="pointer-events-none absolute left-[740px] top-[340px] h-[170px] w-[50px] drop-shadow-[2px_2px_2px_rgba(0,0,0,0.5)]" viewBox="0 0 50 170"><path d="M14 24l22.500 129" stroke="red" stroke-width="3"/><path d="M11.500 5L7 29.500l8.500-5 8.500 3z" fill="red"/></svg>
      </div>
      <!-- vertical scroll bar -->
      <div class="flex w-[14px] flex-col items-center">
        <div class="mt-[5px] h-1 w-2.5 border-y border-[#8f9ab2]"></div>
        <div class="mt-[5px] flex w-full flex-1 flex-col items-center bg-[#e9ebf0] py-2">
          <svg class="h-1 w-1.5 rotate-180"><use href="#caret"/></svg>
          <div class="mb-[53px] mt-[9px] w-3 flex-1 rounded-full bg-[#d4d7df]"></div>
          <svg class="h-1 w-1.5"><use href="#caret"/></svg>
        </div>
      </div>
    </div>

    <!-- sheet tabs -->
    <div class="flex h-[23px] shrink-0 items-center border-y border-[#e0e3e9]">
      <div class="flex w-[119px] items-center gap-[15px] pl-[15px] text-[#a7adb8]">
        <svg class="h-3 w-[11px]" viewBox="0 0 11 12" fill="none" stroke="currentColor"><path d="M.5 0v12M9.500 0L3.500 6l6 6"/></svg>
        <svg class="h-3 w-[11px]" viewBox="0 0 11 12" fill="none" stroke="currentColor"><path d="M8.500 0L2.500 6l6 6"/></svg>
        <svg class="h-3 w-[11px]" viewBox="0 0 11 12" fill="none" stroke="currentColor"><path d="M2.500 0l6 6-6 6"/></svg>
        <svg class="h-3 w-[11px]" viewBox="0 0 11 12" fill="none" stroke="currentColor"><path d="M.5 0l6 6-6 6M9.500 0v12"/></svg>
      </div>
      <button class="h-full w-[74px] bg-[#e5e6ec] pl-0.5 text-[#4b5670]">Sheet1</button>
      <button class="flex h-full w-[56px] justify-center border-r border-[#e0e3e9] bg-white pl-px font-bold text-[#1fb87a]"><span class="w-[45px] border-b-2 border-[red] leading-5">副本</span></button>
      <button class="ml-[5px]" aria-label="新建工作表"><svg class="size-[13px]" viewBox="0 0 13 13" stroke="#3c465d"><path d="M6.500 0v13M0 6.500h13"/></svg></button>
      <div class="ml-auto flex w-[668px] items-center pr-[23px]">
        <span class="h-2.5 w-[3px] border-x border-[#8f9ab2]"></span>
        <div class="ml-1.5 flex h-3.5 flex-1 items-center bg-[#e9ebf0] px-1.5">
          <svg class="h-1 w-1.5 rotate-90"><use href="#caret"/></svg>
          <div class="ml-2 mr-[46px] h-3 flex-1 rounded-full bg-[#d4d7df]"></div>
          <svg class="h-1 w-1.5 -rotate-90"><use href="#caret"/></svg>
        </div>
        <span class="ml-1.5 h-2.5 w-[3px] border-x border-[#8f9ab2]"></span>
      </div>
    </div>
  </section>

  <!-- selection pane -->
  <aside class="flex w-[262px] shrink-0 flex-col border-x border-[#dfe2e7] px-3 text-[#3b465e]">
    <div class="-ml-[3px] -mr-1 flex h-[30px] items-center">
      <span>选择窗格</span><svg class="ml-1 h-1 w-[5px]"><use href="#caret"/></svg>
      <svg class="ml-auto size-3.5" viewBox="0 0 14 14" fill="none" stroke="currentColor"><path d="M3.500.500h7M4.500.500v5l-3.500 3.500v.500h12v-.500l-3.500-3.500v-5M7 9.500V14"/></svg>
      <button class="ml-3" aria-label="关闭窗格"><svg class="size-3" viewBox="0 0 12 12" stroke="currentColor"><path d="M1 1l10 10M11 1L1 11"/></svg></button>
    </div>
    <h2 class="mb-2 mt-2 h-[18px] text-sm leading-[18px]">文档中的对象</h2>
    <div class="flex-1 rounded-sm border border-[#e0e2e6] bg-white pl-[5px] pr-3 pt-1">
      <div class="flex items-center justify-between text-[#232a3d]"><span class="leading-4">图片 1</span>
      <button class="flex size-5 items-center justify-center border border-[#dfe2e6]" aria-label="显示或隐藏"><svg class="h-3 w-3.5" viewBox="0 0 14 12" fill="none" stroke="#5d6470"><path d="M.5 6Q7-3.500 13.500 6 7 15.500.500 6z"/><circle cx="7" cy="6" r="2"/></svg></button></div>
    </div>
    <div class="mt-[7px] flex items-center text-[#232a3d]">
      <span>叠放次序</span>
      <button class="ml-2.5 flex size-[23px] items-center justify-center border border-[#e1e4e9] bg-[#fafbfc]" aria-label="上移"><svg class="size-2.5" viewBox="0 0 10 10" fill="#8f99ae"><path d="M5 0l5 5H6.500v5h-3V5H0z"/></svg></button>
      <button class="ml-2.5 flex size-[23px] items-center justify-center border border-[#e1e4e9] bg-[#fafbfc]" aria-label="下移"><svg class="size-2.5" viewBox="0 0 10 10" fill="#8f99ae"><path d="M5 10l5-5H6.500V0h-3v5H0z"/></svg></button>
    </div>
    <div class="mb-[25px] mt-[7px] flex gap-2.5">
      <button class="h-6 w-16 border border-[#cfd3da] bg-white leading-5">全部显示</button>
      <button class="h-6 w-[65px] border border-[#cfd3da] bg-white leading-5">全部隐藏</button>
    </div>
  </aside>

  <!-- tool strip -->
  <aside class="flex w-[43px] shrink-0 flex-col items-center pr-px pt-[11px] text-[#2b3248]">
    <div class="h-1 w-5 border-y border-[#cdd1d8]"></div>
    <div class="mt-[13px] flex flex-col gap-1">
      <button class="flex size-8 items-center justify-center text-[#5b6579]" aria-label="快捷"><svg class="size-4" viewBox="0 0 16 16" fill="none" stroke="currentColor"><path d="M5 9C6 4 10 1 15 1c0 5-3 9-8 10zM5 7H2L1 9.500l3 .5M9 11v3l-2.500 1L6 12"/><circle cx="10.500" cy="5.500" r="1.500"/><path d="M3 12l-2 2M5 14l-1 1"/></svg></button>
      <button class="flex size-8 items-center justify-center rounded-sm bg-[#d8dce3]" aria-label="选择"><svg class="size-4" viewBox="0 0 16 16" fill="none" stroke="currentColor"><path d="M3.500.500l11 9-5 .5 2.500 4-2 1.500L7.500 11l-4 3z"/></svg></button>
      <button class="flex size-8 items-center justify-center text-[#8f98aa]" aria-label="属性"><svg class="size-4" viewBox="0 0 16 16" fill="none" stroke="currentColor"><circle cx="2.500" cy="3.500" r="2"/><circle cx="11.500" cy="12.500" r="2"/><path d="M4.500 3.500H16M0 12.500h9.500M13.500 12.500H16"/></svg></button>
      <button class="flex size-8 items-center justify-center text-[#8f98aa]" aria-label="分析"><svg class="size-4" viewBox="0 0 16 16" fill="none" stroke="currentColor"><path d="M1.500 1.500h2v2h-2zM5.500 1.500h9v2h-9zM1.500 5.500h2v9h-2zM13.500 6v7.500H7M11.500 8l2-2 2 2M9 11.500l-2 2 2 2"/></svg></button>
      <button class="flex size-8 items-center justify-center" aria-label="稻壳"><svg class="size-4" viewBox="0 0 16 16" fill="none" stroke="currentColor"><path d="M1.500 7.500v6.500H6M14.500 5V3L13 1.500H3L.500 4v2c1 2 3 2 3.500 0 .5 2 3 2 3.500 0"/><path d="M8 9c0 3 1 5 4 6 3-1 4-3 4-6l-2 1-2-4-2 4zM12 7v8" fill="#9ba1ae"/></svg></button>
      <button class="flex size-8 items-center justify-center" aria-label="智能"><svg class="size-4" viewBox="0 0 16 16" fill="none" stroke="currentColor"><path d="M5.500 15.500h5v-2c3-1 4-3 4-6a6.500 6.500 0 0 0-13 0c0 3 1 5 4 6zM9 3.500L5.500 8H8l-1 3.500L10.500 7H8.500z"/></svg></button>
      <button class="flex size-8 items-center justify-center" aria-label="查阅"><svg class="size-4" viewBox="0 0 16 16" fill="none" stroke="currentColor"><path d="M8 2.500C5 1.500 3 1.500.500 1.500v12c2.500 0 5 0 7.500 1zM8 2.500c3-1 5-1 7.500-1V7M8 14.500h2"/><circle cx="12.500" cy="10.500" r="2.500"/><path d="M14.500 12.500l1.500 2"/></svg></button>
    </div>
    <span class="mt-auto h-px w-[38px] bg-[#dadde3]"></span>
    <button class="mb-4 mt-[22px] flex gap-0.5" aria-label="更多工具"><span class="size-1 rounded-full border border-[#2b3248]"></span><span class="size-1 rounded-full border border-[#2b3248]"></span><span class="size-1 rounded-full border border-[#2b3248]"></span></button>
  </aside>
</main>

<!-- status bar -->
<footer class="flex h-7 shrink-0 items-center border-t border-[#e0e3e9] pb-0.5 text-[#2b3248]">
  <svg class="ml-4 size-4" viewBox="0 0 16 16" fill="none" stroke="currentColor"><circle cx="4" cy="4" r="3.500"/><circle cx="4" cy="4" r="1.500"/><path d="M9 1.500h4.500v13M13.500 3.500h2v-2h-2M1.500 12h10v3.500h-10zM3.500 12V9"/></svg>
  <span class="ml-[15px] h-3.5 w-px bg-[#dfe2e7]"></span>
  <div class="ml-auto flex items-center pr-4">
    <button class="flex size-6 items-center justify-center rounded-sm bg-[#d8dde3]" aria-label="护眼模式"><svg class="size-4" viewBox="0 0 16 16" fill="none" stroke="currentColor"><path d="M.5 9.500Q8 1.500 15.500 9.500 8 19 .500 9.500zM8 0v3M2 1.500l1.500 2M14 1.500l-1.500 2"/><circle cx="8" cy="9.500" r="4"/><circle cx="8" cy="9.500" r="1.500"/></svg></button>
    <button class="ml-[3px] flex items-center gap-1" aria-label="阅读模式"><svg class="size-4" viewBox="0 0 16 16" fill="none" stroke="currentColor"><path d="M5.500.500h5v15h-5zM.5 5.500h15v5H.500z"/></svg><svg class="h-1 w-1.5"><use href="#caret"/></svg></button>
    <span class="ml-3 h-3.5 w-px bg-[#dfe2e7]"></span>
    <button class="ml-2.5 flex size-6 items-center justify-center rounded-sm bg-[#d8dde3]" aria-label="普通视图"><svg class="size-4" viewBox="0 0 16 16" fill="none" stroke="currentColor"><path d="M.5 1.500h15v13H.500zM.5 5.500h15M.5 10.500h15M5.500 1.500v13M10.500 1.500v13"/></svg></button>
    <button class="ml-1.5" aria-label="页面布局"><svg class="size-4" viewBox="0 0 16 16" fill="none" stroke="currentColor"><path d="M1.500.500h13v15h-13zM4.500 3.500h7v9h-7zM8 3.500v9"/></svg></button>
    <button class="ml-[11px]" aria-label="分页预览"><svg class="size-4" viewBox="0 0 16 16" fill="none" stroke="currentColor"><path d="M.5 1.500h15v13H.500zM.5 8.500h10v-7M5.500 1.500v7"/></svg></button>
    <span class="ml-3 h-3.5 w-px bg-[#dfe2e7]"></span>
    <button class="ml-2.5 flex items-center gap-1.5 text-[13px] leading-5">145%<svg class="h-1 w-1.5"><use href="#caret"/></svg></button>
    <button class="ml-[11px] h-0.5 w-2.5 bg-[#2b3248]" aria-label="缩小"></button>
    <input type="range" aria-label="缩放" value="55" class="ml-3 h-3 w-[143px] appearance-none bg-[linear-gradient(to_right,#3c465d_0,#3c465d_55%,#d9dce2_55%)] bg-[length:100%_1px] bg-center bg-no-repeat [&::-webkit-slider-thumb]:size-3 [&::-webkit-slider-thumb]:appearance-none [&::-webkit-slider-thumb]:rounded-full [&::-webkit-slider-thumb]:border [&::-webkit-slider-thumb]:border-[#3c465d] [&::-webkit-slider-thumb]:bg-[#f1f2f4]">
    <button class="ml-2" aria-label="放大"><svg class="size-2.5" viewBox="0 0 10 10" stroke="currentColor" stroke-width="2"><path d="M5 0v10M0 5h10"/></svg></button>
    <button class="ml-3" aria-label="全屏"><svg class="size-3.5" viewBox="0 0 14 14" fill="none" stroke="currentColor"><path d="M.5 4V.500H4M10 .500h3.500V4M13.500 10v3.500H10M4 13.500H.500V10M.5.500L5 5M13.500.500L9 5M13.500 13.500L9 9M.5 13.500L5 9"/></svg></button>
  </div>
</footer>

<!-- input method bar floating over the window -->
<div class="absolute bottom-[88px] right-px z-20 flex h-[26px] w-[140px] items-center justify-between border border-[#a9c0e0] bg-white pl-6 pr-1 text-[#0b6bd3]">
  <svg class="absolute -left-[15px] -top-[5px] size-8" viewBox="0 0 32 32"><defs><linearGradient id="sg" x1="0" y1="0" x2="0" y2="1"><stop offset="0" stop-color="#f9733f"/><stop offset="1" stop-color="#ee4310"/></linearGradient></defs><path d="M4 5L24 .500a3 3 0 0 1 3.500 2L31.500 24a3 3 0 0 1-2 3.500L9 31.500a3 3 0 0 1-3.500-2L1 8.500A3 3 0 0 1 4 5z" fill="url(#sg)"/><path d="M26 8C19 5 8 7 8 11.500c0 5 18 1 18 7.500 0 5-12 6-19 3.500" fill="none" stroke="#fff" stroke-width="4"/></svg>
  <svg class="size-3.5" viewBox="0 0 14 14" fill="none" stroke="currentColor" stroke-width="1.800"><path d="M1 14L7 1l6 13M3.500 9.500h7"/></svg>
  <svg class="h-3.5 w-3" viewBox="0 0 12 14" fill="currentColor"><circle cx="2" cy="4" r="2"/><circle cx="10" cy="8.500" r="2"/><path d="M12 8.500q0 3-3.500 4.500l1-4z"/></svg>
  <svg class="h-4 w-3" viewBox="0 0 12 16" fill="none" stroke="currentColor" stroke-width="1.500"><rect x="3" width="6" height="9.500" rx="3" fill="currentColor" stroke="none"/><path d="M.8 6.500c0 7 10.400 7 10.400 0M4 15h4M6 12v2"/></svg>
  <svg class="h-3 w-[15px]" viewBox="0 0 15 12"><rect width="15" height="12" rx="1.500" fill="currentColor"/><path d="M2 3h11M2 6h11M4 9.500h7" stroke="#fff" stroke-width="1.500" stroke-dasharray="2 1"/></svg>
  <svg class="size-[13px]" viewBox="0 0 13 13" fill="currentColor"><rect width="6" height="6" rx="1.500"/><rect y="7" width="6" height="6" rx="1.500"/><rect x="7" y="7" width="6" height="6" rx="1.500"/><circle cx="10" cy="3" r="2.200" fill="none" stroke="currentColor" stroke-width="1.600"/></svg>
</div>

<!-- level meter docked to the edge -->
<div class="absolute bottom-[127px] right-0 z-20 h-[59px] w-2.5 rounded-l border border-[#3d4250] bg-[#565c6d] pl-[3px] pt-1.5">
  <div class="h-[46px] w-1 bg-[linear-gradient(to_bottom,#2e323e_0,#2e323e_25%,#e4b95a_25%,#c8d96b_50%,#86dba0_75%,#5ad4d4)]"><div class="h-full bg-[repeating-linear-gradient(to_bottom,transparent_0_1px,#565c6d_1px_2px)]"></div></div>
</div>

<!-- site mark -->
<div class="pointer-events-none absolute bottom-1.5 right-3 z-20 flex h-[46px] items-center opacity-85">
  <svg class="h-10 w-[42px]" viewBox="0 0 42 40"><defs><linearGradient id="wa" x1="0" y1="1" x2="1" y2="0"><stop offset="0" stop-color="#3c6fc0"/><stop offset="1" stop-color="#6fd0f0"/></linearGradient><linearGradient id="wb" x1="0" y1="1" x2="1" y2="0"><stop offset="0" stop-color="#e8e25c"/><stop offset="1" stop-color="#45b97c"/></linearGradient></defs>
    <path d="M42 2C26-2 5 4 1 19c-1 5 1 9 4 12C4 20 12 8 42 2z" fill="url(#wa)"/>
    <path d="M32 13c12 4 10 18-6 23-8 3-16 3-24 4 16-4 28-12 30-27z" fill="url(#wb)"/>
    <path d="M9 30c-3-8 4-17 15-18 6 0 7 6 2 10-4 3-9 3-9-1 2 3 8 0 7-3-2-3-10 1-11 6-1 4 5 5 11 2-4 6-13 8-15 4z" fill="#5b8fd2"/></svg>
  <div class="flex flex-col font-bold">
    <span class="text-[21px] leading-6 text-[#5a9ad8]">极光下载站</span>
    <span class="font-['Liberation_Sans',sans-serif] text-base leading-5 text-[#62c683]">www.xz7.com</span>
  </div>
</div>

<script>
const widths = [48, 104, 104, 186, 225, 104, 104, 104, 104, 104, 104, 104, 104, 104];
const letters = ['A', 'B', 'C', 'D', 'E', 'F', 'G', 'H', 'I', 'J', 'K', 'L', 'M'];
const data = {
  1: ['姓名', '金额', '大写金额', '备注'],
  2: ['A', '3637', '叁仟陆佰叁拾柒'],
  3: ['B', '5363', '伍仟叁佰陆拾叁'],
  4: ['C', '6373', '陆仟叁佰柒拾叁'],
  5: ['D', '6366', '陆仟叁佰陆拾陆'],
  6: ['E', '7663', '柒仟陆佰陆拾叁'],
  7: ['', '', '批准']
};
document.getElementById('cols').innerHTML = widths.map(w => `<col style="width:${w}px">`).join('');

let head = '<th class="h-8 border-b border-r border-[#a9b3cb] bg-[#f5f7f9] p-0" aria-label="全选"><svg class="ml-auto mr-[7px] mt-1 size-[15px]" viewBox="0 0 15 15"><path d="M15 0v15H0z" fill="#b9bbbd"/></svg></th>';
for (const l of letters) {
  head += l === 'E'
    ? '<th scope="col" class="h-8 border-b-2 border-r border-b-[#1eb57b] border-r-[#b4bccf] bg-[#d2d6dd] p-0 pb-px text-xl font-normal leading-6 text-[#1f9e6d]">E</th>'
    : `<th scope="col" class="h-8 border-b border-[#a9b3cb] bg-[#f5f7f9] bg-[linear-gradient(to_bottom,transparent,#b4bccf)] bg-[length:1px_100%] bg-right bg-no-repeat p-0 pb-0.5 text-xl font-normal leading-6 text-black">${l}</th>`;
}
document.getElementById('head').innerHTML = head;

let html = '';
for (let r = 1; r <= 28; r++) {
  const h = r === 1 ? 'h-[39px]' : r === 7 ? 'h-[88px]' : 'h-[26px]';
  html += '<tr>';
  html += r === 9
    ? '<th scope="row" class="h-[26px] border-b border-r-2 border-b-[#b4bccf] border-r-[#1eb57b] bg-[#d2d6dd] p-0 pb-0.5 text-xl font-normal leading-5 text-[#1f9e6d]">9</th>'
    : `<th scope="row" class="${h} border-r border-[#a9b3cb] bg-[#f5f7f9] bg-[linear-gradient(to_right,transparent,#b4bccf)] bg-[length:100%_1px] bg-bottom bg-no-repeat p-0 pb-[3px] text-xl font-normal leading-5 text-black">${r > 27 ? '' : r}</th>`;
  for (let c = 0; c < 13; c++) {
    const boxed = r <= 7 && c <= 3;
    let border = boxed ? 'border-b border-r border-black' : 'border-b border-r border-[#c4c8de]';
    let inner = (data[r] || [])[c] || '';
    let text = 'text-center leading-[25px]';
    if (r > 1 && r < 7) text = 'text-center align-bottom leading-5';
    if (r === 1) text = 'pt-0.5 text-center leading-6';
    if (r === 1 && c === 3) text = 'pl-[5px] text-left text-[30px] font-medium leading-8';
    if (r === 7 && c === 2) text = 'pl-[3px] pt-0.5 text-left leading-6';
    if (r === 9 && c === 2) {
      border = 'border-b border-[#c4c8de]';
      text = 'pl-px text-left leading-6';
      inner = '<a href="#docx" class="relative z-10 block h-6 whitespace-nowrap leading-7 text-[#800080] underline decoration-2"><span class="font-[\'Liberation_Mono\',monospace] text-lg leading-7">[</span>金山文档<span class="font-[\'Liberation_Mono\',monospace] text-lg leading-7">] </span>盼望着<span class="font-[\'Liberation_Mono\',monospace] text-lg leading-7">.docx</span></a>';
    }
    if (r === 9 && c === 4) {
      text = 'relative z-10 pl-0.5 text-left leading-6';
      inner = '<a href="#Sheet1!E9" class="block h-6 whitespace-nowrap font-[\'Liberation_Mono\',monospace] text-lg leading-7 text-[#800080] underline">Sheet1!E9</a><span class="absolute -inset-0.5 border-[3px] border-[#1eb57b]"></span><span class="absolute -bottom-1 -right-1 size-[7px] border border-white bg-[#1eb57b]"></span>';
    }
    html += `<td class="${h} ${border} ${text} p-0 font-['Liberation_Serif','Noto_Sans_CJK_SC',serif] ${r === 1 && c === 3 ? '' : 'text-[21px] font-light'} text-black">${inner}</td>`;
  }
  html += '</tr>';
}
document.getElementById('rows').innerHTML = html;
</script>
</body>
</html>
